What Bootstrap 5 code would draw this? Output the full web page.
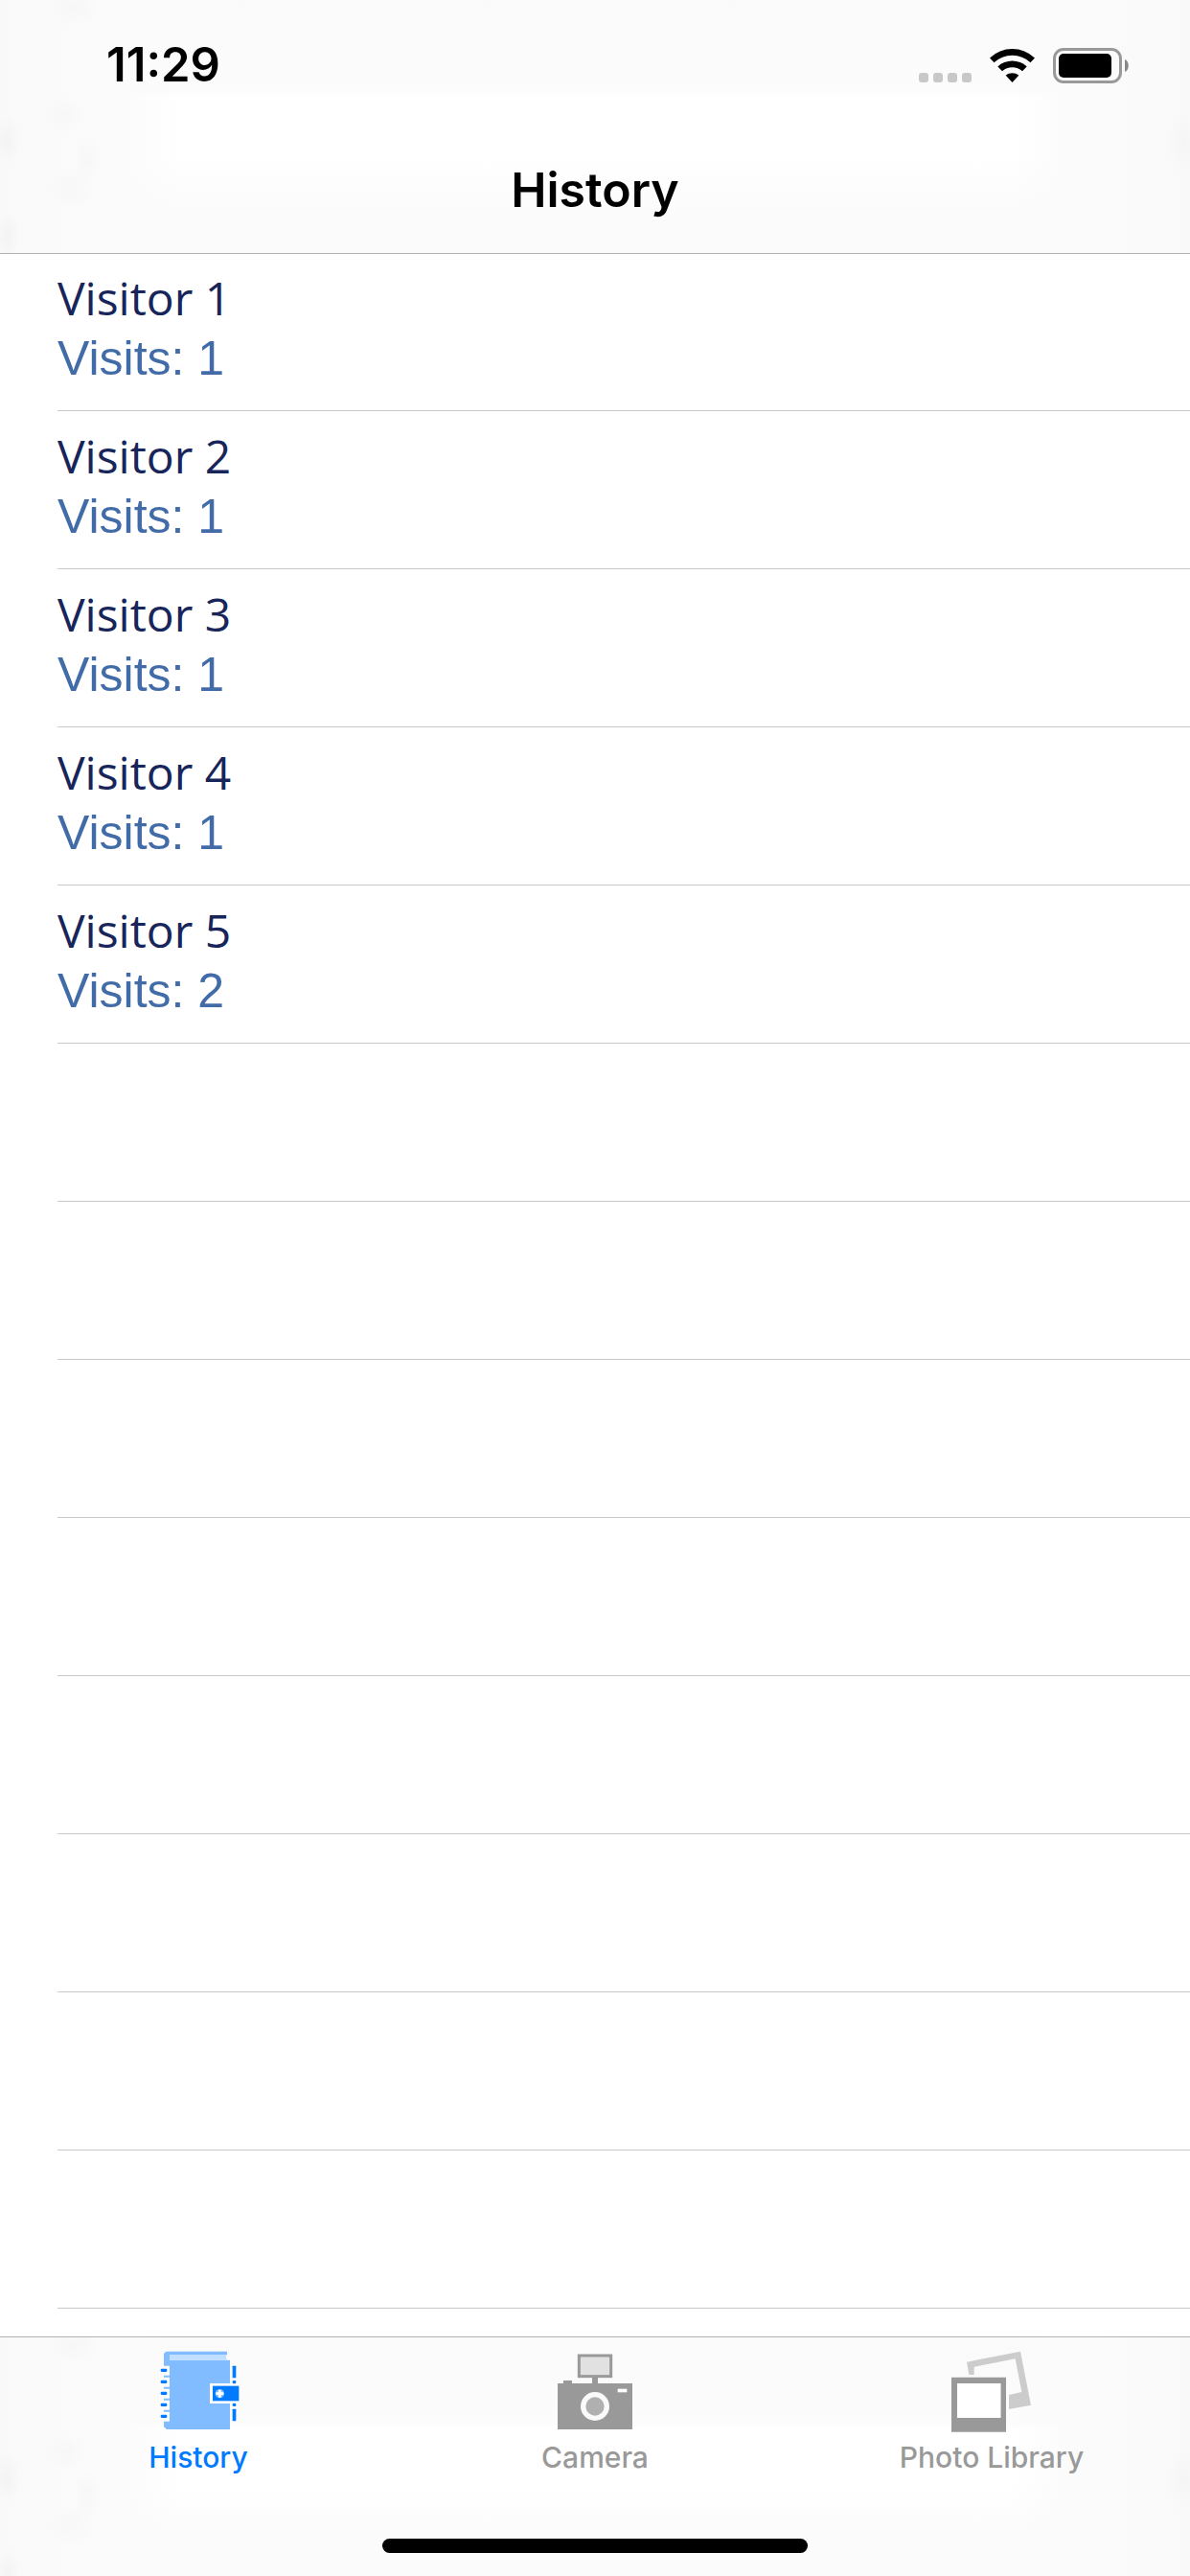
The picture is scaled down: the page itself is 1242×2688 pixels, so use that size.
<!DOCTYPE html>
<html lang="en">
<head>
<meta charset="utf-8">
<meta name="viewport" content="width=device-width, initial-scale=1">
<title>History</title>
<link href="https://cdn.jsdelivr.net/npm/bootstrap@5.3.0/dist/css/bootstrap.min.css" rel="stylesheet">
<style>
body { font-family: Inter, "Liberation Sans", sans-serif; color: #000; background: #fff; }
.bar-tint {
  background:
    radial-gradient(ellipse 14px 26px at 7px 146px, #f3f3f3, transparent),
    radial-gradient(ellipse 12px 24px at 8px 246px, #f3f3f3, transparent),
    radial-gradient(ellipse 22px 20px at 68px 120px, #f7f7f7, transparent),
    radial-gradient(ellipse 14px 26px at 91px 165px, #f7f7f7, transparent),
    radial-gradient(ellipse 28px 22px at 72px 196px, #f7f7f7, transparent),
    radial-gradient(ellipse 28px 20px at 76px 8px, #f7f7f7, transparent),
    radial-gradient(ellipse 18px 34px at 1236px 150px, #f5f5f5, transparent),
    linear-gradient(90deg, #f9f9f9 0, #fbfbfb 120px, transparent 190px, transparent calc(100% - 190px), #fbfbfb calc(100% - 120px), #f9f9f9 100%),
    linear-gradient(#fafafa, #fcfcfc 36%, #fff 38%, #fff 62%, #fcfcfc 80%, #fafafa);
}
.top-bar { box-shadow: 0 1px #b2b2b2; }
.status-row { height: 132px; padding: 4px 64px 0 111px; }
.clock { font-size: 49px; line-height: 60px; font-weight: 600; }
.status-icons { gap: 19px; }
.title-row { height: 132px; }
.page-title { font-size: 50px; line-height: 60px; font-weight: 600; }
.visit-list { padding-left: 60px; }
.visit-item { height: 165px; padding-top: 16px; border-bottom: 1px solid #c8c7cc; }
.visitor-name { font: 48px/62px "Open Sans", sans-serif; color: #17255a; }
.visitor-count { font: 50px/64px "Liberation Sans", sans-serif; color: #416ca8; }
.tab-bar { border-top: 1px solid #b2b2b2; }
.tab-link { padding-top: 13px; gap: 7px; font-size: 30px; line-height: 36px; font-weight: 500; color: #999; text-decoration: none; }
.tab-link.active { color: #007aff; }
.home-strip { height: 106px; padding-bottom: 24px; }
.home-pill { width: 444px; height: 15px; background: #000; }
</style>
<script src="https://cdn.jsdelivr.net/npm/bootstrap@5.3.0/dist/js/bootstrap.bundle.min.js"></script>
</head>
<body>
<div class="d-flex flex-column min-vh-100">
  <header class="top-bar bar-tint">
    <div class="status-row d-flex align-items-center justify-content-between">
      <span class="clock">11:29</span>
      <div class="status-icons d-flex align-items-center">
        <svg width="55" height="37" viewBox="0 0 55 37" fill="#c8c8c8" aria-hidden="true"><rect y="26" width="10" height="10" rx="3"/><rect x="15" y="26" width="10" height="10" rx="3"/><rect x="30" y="26" width="10" height="10" rx="3"/><rect x="45" y="26" width="10" height="10" rx="3"/></svg>
        <svg width="47" height="37" viewBox="0 0 47 37" aria-hidden="true"><path d="M0 10.500A34 34 0 0 1 47 10.500L42.500 15.200A28 28 0 0 0 4.500 15.200ZM8.300 19.500A22.500 22.500 0 0 1 38.700 19.500L34 24.300A16 16 0 0 0 13 24.300ZM16.600 28.500A11.500 11.500 0 0 1 30.400 28.500L23.500 36Z"/></svg>
        <svg width="79" height="37" viewBox="0 0 79 37" aria-hidden="true"><rect x="1.500" y="1.500" width="69" height="34" rx="9.500" fill="none" stroke="#999" stroke-width="3"/><rect x="6" y="6" width="55" height="25" rx="5"/><path d="M75 12C80 14 80 23 75 25Z" fill="#888"/></svg>
      </div>
    </div>
    <div class="title-row d-flex align-items-center justify-content-center">
      <h1 class="page-title m-0">History</h1>
    </div>
  </header>

  <main class="flex-grow-1">
    <ul class="visit-list list-unstyled m-0">
      <li class="visit-item"><div class="visitor-name">Visitor 1</div><div class="visitor-count">Visits: 1</div></li>
      <li class="visit-item"><div class="visitor-name">Visitor 2</div><div class="visitor-count">Visits: 1</div></li>
      <li class="visit-item"><div class="visitor-name">Visitor 3</div><div class="visitor-count">Visits: 1</div></li>
      <li class="visit-item"><div class="visitor-name">Visitor 4</div><div class="visitor-count">Visits: 1</div></li>
      <li class="visit-item"><div class="visitor-name">Visitor 5</div><div class="visitor-count">Visits: 2</div></li>
      <li class="visit-item"></li>
      <li class="visit-item"></li>
      <li class="visit-item"></li>
      <li class="visit-item"></li>
      <li class="visit-item"></li>
      <li class="visit-item"></li>
      <li class="visit-item"></li>
      <li class="visit-item"></li>
    </ul>
  </main>

  <footer class="tab-bar bar-tint">
    <nav class="row g-0 text-center">
      <a class="tab-link active col d-flex flex-column align-items-center" href="#" aria-current="page">
        <svg width="88" height="87" viewBox="189 156 264 261" aria-hidden="true">
          <path fill="#80bcff" d="M220 161H411V171H232V188H420V405H222L213 397V380H231V350H213V344H231V314H213V308H231V278H213V272H231V242H213V236H231V206H213V168Z"/>
          <path fill="#c0deff" d="M232 171H411L407 179L411 188H232Z"/>
          <path fill="#fcfcfc" d="M357 261H421V324H357Z"/>
          <g fill="#007aff"><rect x="203" y="215" width="20" height="10" rx="4"/><rect x="203" y="251" width="20" height="10" rx="4"/><rect x="203" y="287" width="20" height="10" rx="4"/><rect x="203" y="323" width="20" height="10" rx="4"/><rect x="203" y="359" width="20" height="10" rx="4"/><rect x="366" y="269" width="82" height="47"/><rect x="428" y="206" width="11" height="38" rx="2"/><rect x="428" y="252" width="11" height="10" rx="4"/><rect x="428" y="323" width="11" height="10" rx="4"/><rect x="428" y="341" width="11" height="38" rx="2"/></g>
          <circle cx="388" cy="293" r="14" fill="#80bcff"/><path fill="#fff" d="M384 281H392V289H400V297H392V305H384V297H376V289H384Z"/>
        </svg>
        <span>History</span>
      </a>
      <a class="tab-link col d-flex flex-column align-items-center" href="#">
        <svg width="88" height="87" viewBox="171 156 264 261" aria-hidden="true">
          <path fill="#999" d="M186 261H204V252H231V261H294V242H312V261H420V405H186Z"/>
          <rect x="253" y="174" width="100" height="65" fill="#e1e1e1" stroke="#999" stroke-width="9"/>
          <rect x="374" y="278" width="29" height="11" fill="#fff"/>
          <circle cx="303" cy="333" r="37" fill="#b0b0b0" stroke="#fafafa" stroke-width="16"/>
        </svg>
        <span>Camera</span>
      </a>
      <a class="tab-link col d-flex flex-column align-items-center" href="#">
        <svg width="88" height="87" viewBox="273 156 264 261" aria-hidden="true">
          <path fill="#ccc" d="M327 194L495 161L528 329L459 342V297L499 288L479 184L350 209V234H334Z"/>
          <path fill="#999" fill-rule="evenodd" d="M279 242H450V413H279ZM297 261V369H433V261Z"/><path fill="#fff" d="M297 261H433V369H297Z"/>
        </svg>
        <span>Photo Library</span>
      </a>
    </nav>
    <div class="home-strip d-flex align-items-end justify-content-center"><div class="home-pill rounded-pill"></div></div>
  </footer>
</div>
</body>
</html>
